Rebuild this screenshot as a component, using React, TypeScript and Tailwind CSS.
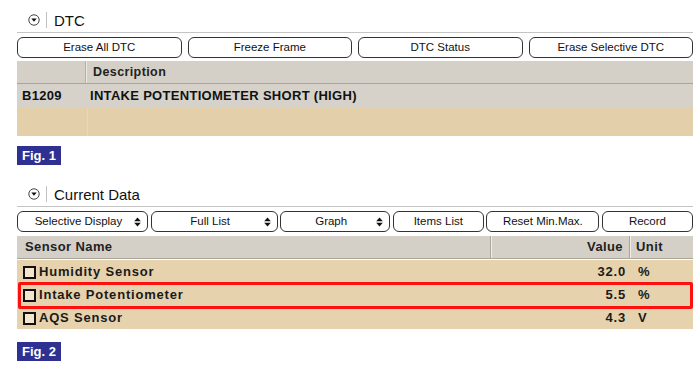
import React from "react";

const font = { fontFamily: '"Liberation Sans", Arial, sans-serif' };

function CollapseIcon() {
  return (
    <svg width="12" height="12" viewBox="0 0 12 12" className="block">
      <circle cx="6" cy="6" r="5.2" fill="#fff" stroke="#444" strokeWidth="1" />
      <path d="M3.3 4.6 L8.7 4.6 L6 7.8 Z" fill="#111" />
    </svg>
  );
}

function UpDown() {
  return (
    <svg width="7" height="10" viewBox="0 0 7 10" className="block">
      <path d="M3.5 0.5 L6.8 4.2 L0.2 4.2 Z" fill="#111" />
      <path d="M0.2 5.8 L6.8 5.8 L3.5 9.5 Z" fill="#111" />
    </svg>
  );
}

function SectionTitle({ title }: { title: string }) {
  return (
    <div className="flex h-[25px] items-center border-b border-[#c4c4c4]">
      <div className="ml-[11px] flex h-[15px] items-center">
        <CollapseIcon />
      </div>
      <div className="ml-[6px] h-[16px] w-px bg-[#c0c0c0]" />
      <div className="ml-[7px] text-[15px] leading-none text-[#111]">{title}</div>
    </div>
  );
}

function Btn({ label, w, select }: { label: string; w?: string; select?: boolean }) {
  return (
    <div
      className={`relative flex h-[21px] items-center justify-center rounded-[6px] border border-[#333] bg-white text-[11.5px] text-[#111] ${w ?? ""}`}
    >
      <span className={select ? "-ml-[8px]" : ""}>{label}</span>
      {select && (
        <span className="absolute right-[6px] top-[5px]">
          <UpDown />
        </span>
      )}
    </div>
  );
}

function Fig({ n }: { n: string }) {
  return (
    <div className="flex h-[19px] w-[44px] items-center justify-center bg-[#2e3192] text-[13px] font-bold text-white">
      {n}
    </div>
  );
}

function Check() {
  return <div className="h-[13px] w-[13px] border-2 border-[#111] bg-[#f3e6cc]" />;
}

export default function App() {
  const rows = [
    { name: "Humidity Sensor", value: "32.0", unit: "%" },
    { name: "Intake Potentiometer", value: "5.5", unit: "%" },
    { name: "AQS Sensor", value: "4.3", unit: "V" },
  ];
  return (
    <div className="h-[369px] w-[700px] bg-white pl-[17px] pr-[7px]" style={font}>
      <div className="pt-[8px]">
        <SectionTitle title="DTC" />
      </div>
      <div className="mt-[4px] grid grid-cols-4 gap-[6px]">
        <Btn label="Erase All DTC" />
        <Btn label="Freeze Frame" />
        <Btn label="DTC Status" />
        <Btn label="Erase Selective DTC" />
      </div>
      <div className="mt-[3px]">
        <div className="flex h-[23px] border-b border-[#a9a59d] bg-[#d4d0c8]">
          <div className="w-[69px] border-r border-[#b3afa7] shadow-[1px_0_0_#eeeae2]" />
          <div className="flex items-center pl-[7px] text-[12.5px] font-bold tracking-[0.4px] text-[#222]">
            Description
          </div>
        </div>
        <div className="flex h-[24px] items-center bg-[#d6d2ca] text-[13px] font-bold tracking-[0.3px] text-[#111]">
          <div className="w-[73px] pl-[5px]">B1209</div>
          <div>INTAKE POTENTIOMETER SHORT (HIGH)</div>
        </div>
        <div className="flex h-[28px] bg-[#e3cfaa]">
          <div className="w-[71px] border-r border-[#e8d8b8]" />
        </div>
      </div>
      <div className="mt-[10px]">
        <Fig n="Fig. 1" />
      </div>

      <div className="mt-[17px]">
        <SectionTitle title="Current Data" />
      </div>
      <div className="mt-[4px] flex justify-between">
        <Btn label="Selective Display" w="w-[131px]" select />
        <Btn label="Full List" w="w-[127px]" select />
        <Btn label="Graph" w="w-[110px]" select />
        <Btn label="Items List" w="w-[91px]" />
        <Btn label="Reset Min.Max." w="w-[113px]" />
        <Btn label="Record" w="w-[91px]" />
      </div>
      <div className="relative mt-[4px]">
        <div className="flex h-[23px] border-b border-[#a9a59d] bg-[#d4d0c8] text-[13px] font-bold tracking-[0.4px] text-[#222]">
          <div className="flex w-[474px] items-center border-r border-[#a9a59d] pl-[8px] shadow-[1px_0_0_#f2eee6]">
            Sensor Name
          </div>
          <div className="flex w-[139px] items-center justify-end border-r border-[#a9a59d] pr-[6px] shadow-[1px_0_0_#f2eee6]">
            Value
          </div>
          <div className="flex items-center pl-[6px]">Unit</div>
        </div>
        <div className="mt-px bg-[#e6d2ad]">
          {rows.map((r) => (
            <div
              key={r.name}
              className="flex h-[23px] items-center pt-px text-[13px] font-bold tracking-[0.8px] text-[#1a1a1a]"
            >
              <div className="flex w-[475px] items-center pl-[6px]">
                <Check />
                <span className="ml-[3px]">{r.name}</span>
              </div>
              <div className="w-[140px] pr-[6px] text-right">{r.value}</div>
              <div className="pl-[6px]">{r.unit}</div>
            </div>
          ))}
        </div>
        <div className="pointer-events-none absolute left-[1px] right-0 top-[46px] h-[27px] rounded-[2px] border-[3px] border-[#ff1010]" />
      </div>
      <div className="mt-[13px]">
        <Fig n="Fig. 2" />
      </div>
    </div>
  );
}
